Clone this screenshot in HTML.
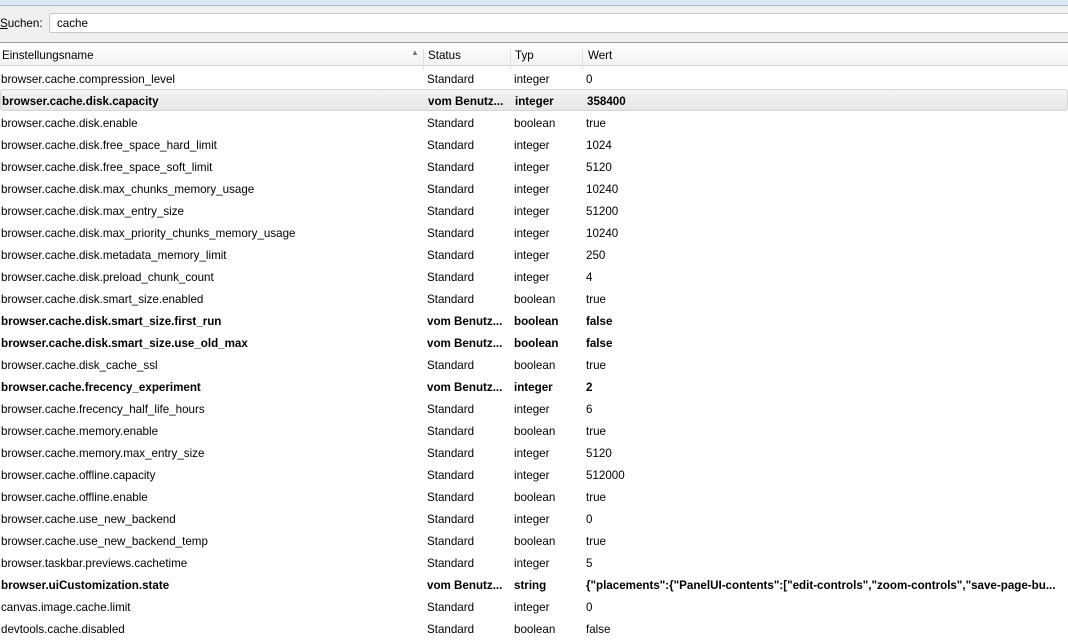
<!DOCTYPE html>
<html><head><meta charset="utf-8"><style>
body{margin:0;width:1068px;height:640px;overflow:hidden;background:#fff;font-family:"Liberation Sans",sans-serif;font-size:11.6px;color:#000;position:relative}
.top{position:absolute;left:0;top:0;width:1068px;height:5px;background:#d9e8f7;border-bottom:1px solid #a9b6c4}
.bar{position:absolute;left:0;top:6px;width:1068px;height:36px;background:#f0f0f0;border-bottom:1px solid #9a9a9a}
.lbl{position:absolute;left:0;top:11px}
.inp{position:absolute;left:49px;top:7px;width:1030px;height:20px;background:#fff;border:1px solid #c8c8c8;border-radius:2px;box-sizing:border-box}
.inp span{position:absolute;left:7px;top:3px}
.hdr{position:absolute;left:0;top:44px;width:1068px;height:21px;background:linear-gradient(#fff,#f1f2f4);border-bottom:1px solid #d5d5d5}
.hdr div{position:absolute;top:5px}
.sep{position:absolute;top:0;width:1px;height:21px;background:#e0e0e0}
.r{position:absolute;left:0;width:1068px;height:22px;white-space:nowrap}
.r span{position:absolute;top:6px}
.b{font-weight:bold}
.hl{background:linear-gradient(#f4f4f4,#e6e6e6);border:1px solid #d6d6d6;border-radius:3px;box-sizing:border-box}
.hl span{top:5px}
</style></head><body>
<div class="top"></div>
<div class="bar"><div class="lbl"><u>S</u>uchen:</div><div class="inp"><span>cache</span></div></div>
<div class="hdr">
<div style="left:2px">Einstellungsname</div>
<div style="left:411px;top:4px;font-size:8px;color:#777">▲</div>
<div class="sep" style="left:423px"></div><div style="left:428px">Status</div>
<div class="sep" style="left:510px"></div><div style="left:515px">Typ</div>
<div class="sep" style="left:582px"></div><div style="left:588px">Wert</div>
</div>
<div id="rows"></div>
<script>
var d=[["browser.cache.compression_level",0,"integer","0"],["browser.cache.disk.capacity",1,"integer","358400"],["browser.cache.disk.enable",0,"boolean","true"],["browser.cache.disk.free_space_hard_limit",0,"integer","1024"],["browser.cache.disk.free_space_soft_limit",0,"integer","5120"],["browser.cache.disk.max_chunks_memory_usage",0,"integer","10240"],["browser.cache.disk.max_entry_size",0,"integer","51200"],["browser.cache.disk.max_priority_chunks_memory_usage",0,"integer","10240"],["browser.cache.disk.metadata_memory_limit",0,"integer","250"],["browser.cache.disk.preload_chunk_count",0,"integer","4"],["browser.cache.disk.smart_size.enabled",0,"boolean","true"],["browser.cache.disk.smart_size.first_run",1,"boolean","false"],["browser.cache.disk.smart_size.use_old_max",1,"boolean","false"],["browser.cache.disk_cache_ssl",0,"boolean","true"],["browser.cache.frecency_experiment",1,"integer","2"],["browser.cache.frecency_half_life_hours",0,"integer","6"],["browser.cache.memory.enable",0,"boolean","true"],["browser.cache.memory.max_entry_size",0,"integer","5120"],["browser.cache.offline.capacity",0,"integer","512000"],["browser.cache.offline.enable",0,"boolean","true"],["browser.cache.use_new_backend",0,"integer","0"],["browser.cache.use_new_backend_temp",0,"boolean","true"],["browser.taskbar.previews.cachetime",0,"integer","5"],["browser.uiCustomization.state",1,"string","{\"placements\":{\"PanelUI-contents\":[\"edit-controls\",\"zoom-controls\",\"save-page-bu..."],["canvas.image.cache.limit",0,"integer","0"],["devtools.cache.disabled",0,"boolean","false"]];
var h="";d.forEach(function(r,i){var t=67+22*i;h+='<div class="r'+(r[1]?' b':'')+(i==1?' hl':'')+'" style="top:'+t+'px"><span style="left:1px">'+r[0]+'</span><span style="left:427px">'+(r[1]?'vom Benutz...':'Standard')+'</span><span style="left:514px">'+r[2]+'</span><span style="left:586px">'+r[3]+'</span></div>';});
document.getElementById("rows").innerHTML=h;
</script>
</body></html>
